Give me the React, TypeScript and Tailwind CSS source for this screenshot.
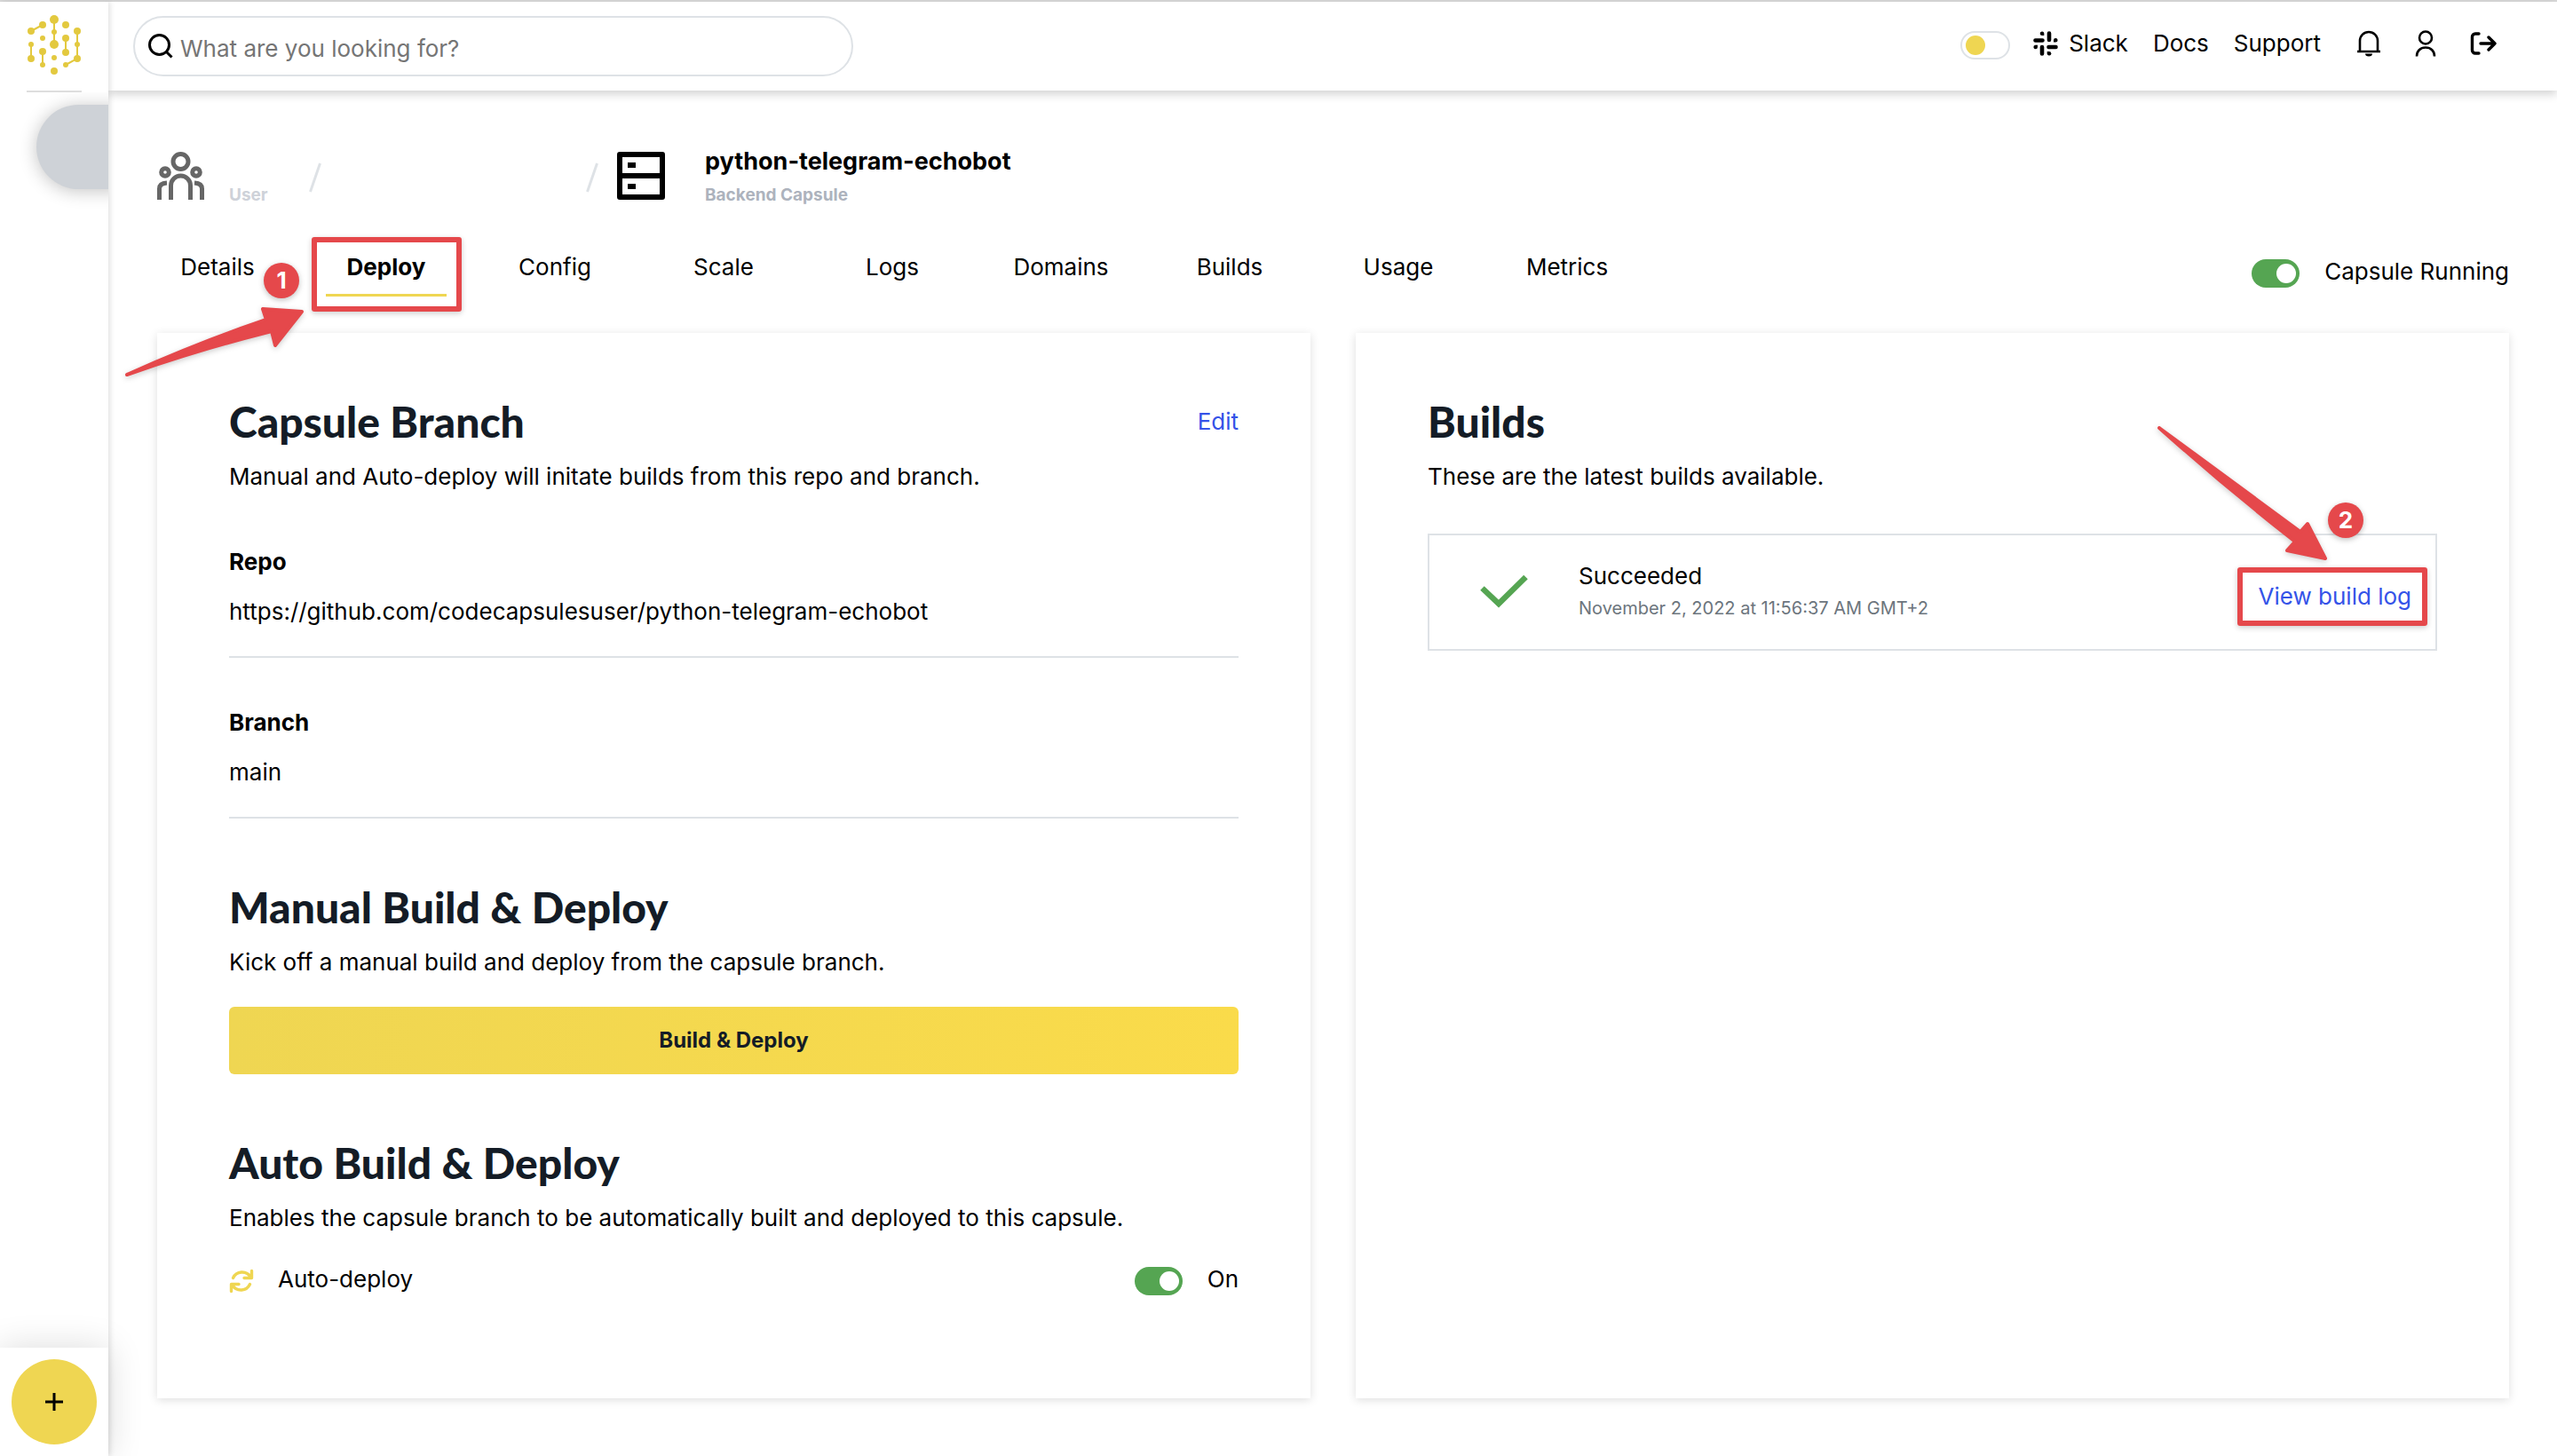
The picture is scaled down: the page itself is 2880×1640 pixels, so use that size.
import React from "react";

const TABS = ["Details", "Deploy", "Config", "Scale", "Logs", "Domains", "Builds", "Usage", "Metrics"];

const NODES: [number, number, number][] = [
  [31, 6, 5], [31, 20, 3], [31, 34, 5], [31, 49, 3], [31, 64, 4],
  [18, 12, 4], [5, 19, 4], [18, 27, 3], [5, 34, 3], [5, 50, 4], [18, 42, 4], [18, 57, 3],
  [44, 12, 4], [44, 27, 4], [44, 43, 4], [44, 57, 3], [57, 50, 4], [57, 34, 3], [57, 19, 4],
];

function Logo() {
  return (
    <svg viewBox="0 0 62 70" className="w-[62px] h-[70px]" fill="#e3c93f" stroke="#e3c93f" aria-hidden="true">
      <path
        d="M31 6V34M18 12 5 19M5 34V50M18 42V57M44 27V43M44 57 57 50V19"
        fill="none"
        strokeWidth="2"
      />
      {NODES.map(([x, y, r]) => (
        <circle key={`${x}-${y}`} cx={x} cy={y} r={r} stroke="none" />
      ))}
    </svg>
  );
}

function Sidebar() {
  return (
    <aside className="relative z-10 flex w-[122px] shrink-0 flex-col bg-white shadow-[2px_0_6px_rgba(0,0,0,0.12)]">
      <a href="#home" aria-label="Home" className="mt-[14px] flex justify-center">
        <Logo />
      </a>
      <hr className="mx-auto mt-4 w-[62px] border-t-2 border-[#dedede]" />
      <div className="overflow-hidden pt-[14px] pb-8">
        <button
          type="button"
          aria-label="Current space"
          className="ml-[41px] block h-[95px] w-[95px] rounded-l-full bg-[#ced2d7] shadow-[0_2px_20px_rgba(0,0,0,0.24)]"
        />
      </div>
      <div className="mt-auto flex h-[122px] items-center justify-center bg-white shadow-[0_0_40px_rgba(0,0,0,0.14)]">
        <button
          type="button"
          aria-label="Add"
          className="flex h-24 w-24 items-center justify-center rounded-full bg-[#efd652]"
        >
          <svg viewBox="0 0 20 20" className="h-5 w-5" stroke="#000" strokeWidth="3" fill="none">
            <path d="M10 0V20M0 10H20" />
          </svg>
        </button>
      </div>
    </aside>
  );
}

function SlackIcon() {
  return (
    <svg viewBox="0 0 28 28" className="h-7 w-7" fill="none" stroke="#000" strokeWidth="4.600" strokeLinecap="round" aria-hidden="true">
      <path d="M18 2.500V10M2.500 10.500H10.500M10 18V25.500M17.500 18H25.500" />
      <g fill="#000" stroke="none">
        <path d="M12.300 5V2.400A2.300 2.300 0 1 0 10 5z" />
        <path d="M23 12.500h2.600A2.300 2.300 0 1 0 23 10.200z" />
        <path d="M15.700 23v2.600A2.300 2.300 0 1 0 18 23z" />
        <path d="M5 15.700H2.400A2.300 2.300 0 1 0 5 18z" />
      </g>
    </svg>
  );
}

function BellIcon() {
  return (
    <svg viewBox="0 0 28 30" className="h-[30px] w-7" fill="none" stroke="#000" strokeWidth="2.6">
      <path d="M1 24H27M4 24V12a10 10 0 0 1 20 0V24" />
      <path d="M10 26.500h8a4 3 0 0 1-8 0z" fill="#000" stroke="none" />
    </svg>
  );
}

function UserIcon() {
  return (
    <svg viewBox="0 0 24 30" className="h-[30px] w-6" fill="none" stroke="#000" strokeWidth="2.6">
      <circle cx="12" cy="8.500" r="7" />
      <path d="M2 29.500c0-6 4-10 10-10s10 4 10 10" />
    </svg>
  );
}

function LogoutIcon() {
  return (
    <svg viewBox="0 0 30 28" className="h-7 w-[30px]" fill="none" stroke="#000" strokeWidth="3.400" strokeLinecap="round" strokeLinejoin="round">
      <path d="M10 3H6a3.500 3.500 0 0 0-3.500 3.500V21.500A3.500 3.500 0 0 0 6 25h4" />
      <path d="M12 14H28M21 7l7 7-7 7" />
    </svg>
  );
}

function Header() {
  return (
    <header className="relative flex h-[100px] items-center justify-between bg-white pl-7 pr-[68px] shadow-[0_4px_10px_rgba(0,0,0,0.18)]">
      <label className="flex h-[68px] w-[811px] items-center gap-2 rounded-full border-2 border-[#dee2e6] pl-[15px]">
        <svg viewBox="0 0 28 28" className="h-7 w-7 shrink-0" fill="none" stroke="#000" strokeWidth="3">
          <circle cx="12.500" cy="12.500" r="11" />
          <path d="M20 20l6.500 6.500" />
        </svg>
        <input
          type="search"
          aria-label="Search"
          placeholder="What are you looking for?"
          className="w-full bg-transparent pt-[6px] text-[26px] leading-10 outline-none placeholder:text-[#757575]"
        />
      </label>
      <nav className="flex items-center pb-[6px] text-[26px] leading-10">
        <input
          type="checkbox"
          aria-label="Dark mode"
          className="relative mt-1 h-8 w-14 appearance-none rounded-full border-2 border-[#dee2e6] before:absolute before:left-1 before:top-[3px] before:h-[22px] before:w-[22px] before:rounded-full before:bg-[#efd652]"
        />
        <a href="#slack" className="ml-[26px] flex items-center gap-3">
          <SlackIcon />
          Slack
        </a>
        <a href="#docs" className="ml-7">Docs</a>
        <a href="#support" className="ml-7">Support</a>
        <button type="button" aria-label="Notifications" className="ml-10"><BellIcon /></button>
        <button type="button" aria-label="Account" className="ml-[38px]"><UserIcon /></button>
        <button type="button" aria-label="Log out" className="ml-[38px]"><LogoutIcon /></button>
      </nav>
    </header>
  );
}

function TeamIcon() {
  return (
    <svg viewBox="0 0 54 54" className="h-[54px] w-[54px]" fill="none" stroke="#666" strokeWidth="5">
      <circle cx="26.500" cy="11" r="8.500" />
      <circle cx="9" cy="23" r="4.300" />
      <circle cx="44" cy="23" r="4.300" />
      <path d="M15.500 54V38a11 11 0 0 1 22 0V54" />
      <path d="M2.500 54V41.500q0-6 8.500-6.500M50.500 54V41.500q0-6-8.500-6.500" />
    </svg>
  );
}

function ServerIcon() {
  return (
    <svg viewBox="0 0 54 54" className="h-[54px] w-[54px]" fill="none" stroke="#000" strokeWidth="6" strokeLinejoin="round">
      <path d="M3 3H51V51H3zM3 27H51" />
      <path d="M12 12h9v6h-9zM12 36h9v6h-9z" fill="#000" stroke="none" />
    </svg>
  );
}

function Slash() {
  return (
    <svg viewBox="0 0 14 34" className="mt-1 h-[34px] w-[14px]" stroke="#dee2e6" strokeWidth="3">
      <path d="M1.500 33 12.500 1" />
    </svg>
  );
}

function Breadcrumb() {
  return (
    <div className="flex items-center">
      <TeamIcon />
      <span className="ml-[27px] w-[90px] self-end text-[19px] leading-6 font-bold text-[#ced2d9]">User</span>
      <Slash />
      <span className="w-[298px]" />
      <Slash />
      <span className="ml-[21px]"><ServerIcon /></span>
      <div className="ml-[45px]">
        <h1 className="text-[27px] leading-9 font-bold">python-telegram-echobot</h1>
        <p className="mt-2 text-[19px] leading-6 font-bold text-[#adb3bd]">Backend Capsule</p>
      </div>
    </div>
  );
}

function Toggle({ label }: { label: string }) {
  return (
    <input
      type="checkbox"
      defaultChecked
      aria-label={label}
      className="relative mt-1 h-8 w-[54px] appearance-none rounded-full bg-[#55a552] before:absolute before:right-1 before:top-[5px] before:h-[22px] before:w-[22px] before:rounded-full before:bg-white"
    />
  );
}

function Badge({ n, place }: { n: number; place: string }) {
  return (
    <span className={`absolute flex h-10 w-10 items-center justify-center rounded-full bg-[#e5484b] text-[26px] leading-10 font-bold text-white shadow-[0_2px_6px_rgba(0,0,0,0.25)] ${place}`}>
      {n}
    </span>
  );
}

function TabCallout() {
  return (
    <span className="pointer-events-none absolute -left-4 -right-[17px] -top-[14px] -bottom-5 z-20 rounded-[3px] border-6 border-[#e5484b] shadow-[0_2px_6px_rgba(0,0,0,0.2)]">
      <Badge n={1} place="-left-[60px] top-[23px]" />
      <svg viewBox="0 0 210 90" className="absolute -left-[221px] top-[67px] h-[90px] w-[210px] drop-shadow-[0_2px_3px_rgba(0,0,0,0.2)]" fill="#e5484b" stroke="#e5484b" strokeWidth="4" strokeLinejoin="round">
        <path d="M7 82Q90 45 164 20L160 8 204 11 174 49 170 33Q90 53 7 82z" />
      </svg>
    </span>
  );
}

function LinkCallout() {
  return (
    <span className="pointer-events-none absolute -left-6 -right-[18px] -top-[13px] -bottom-[13px] rounded-[3px] border-6 border-[#e5484b] shadow-[0_2px_6px_rgba(0,0,0,0.2)]">
      <Badge n={2} place="right-[66px] -top-[79px]" />
      <svg viewBox="0 0 200 160" className="absolute right-[102px] -top-[169px] h-40 w-[200px] drop-shadow-[0_2px_3px_rgba(0,0,0,0.2)]" fill="#e5484b" stroke="#e5484b" strokeWidth="4" strokeLinejoin="round">
        <path d="M6 6 165 123 173 114 193 153 150 144 159 134Q80 72 6 6z" />
      </svg>
    </span>
  );
}

function Tabs() {
  return (
    <div className="mt-[49px] flex items-start justify-between text-[26px] leading-10">
      <nav className="flex gap-[54px]">
        {TABS.map((tab) =>
          tab === "Deploy" ? (
            <a key={tab} href="#deploy" aria-current="page" className="relative w-[136px] border-b-3 border-[#efd652] pb-[10px] text-center font-bold">
              {tab}
              <TabCallout />
            </a>
          ) : (
            <a key={tab} href={`#${tab.toLowerCase()}`} className="w-[136px] text-center">
              {tab}
            </a>
          ),
        )}
      </nav>
      <div className="mt-[5px] flex items-center gap-7">
        <Toggle label="Capsule Running" />
        <span>Capsule Running</span>
      </div>
    </div>
  );
}

function Heading({ children }: { children: React.ReactNode }) {
  return <h2 className="font-[Lato,sans-serif] text-[48px] leading-14 font-black text-[#141c26]">{children}</h2>;
}

function Field({ label, value }: { label: string; value: string }) {
  return (
    <div className="border-b-2 border-[#dee2e6] pb-[30px]">
      <dt className="font-bold">{label}</dt>
      <dd className="mt-4">{value}</dd>
    </div>
  );
}

function RefreshIcon() {
  return (
    <svg viewBox="0 0 28 28" className="mt-1 h-7 w-7" fill="none" stroke="#efd652" strokeWidth="3.400" strokeLinecap="round" strokeLinejoin="round" aria-hidden="true">
      <path d="M25.500 2.500V10.500H17M4.500 10.500C8 3 19 1 25 10" />
      <path d="M2.500 25.500V17.500H11M23.500 17.500C20 25 9 27 3 18" />
    </svg>
  );
}

function DeployCard() {
  return (
    <section className="bg-white px-[81px] pt-[72px] pb-[110px] shadow-[0_2px_10px_rgba(0,0,0,0.13)]">
      <div className="flex items-start justify-between">
        <Heading>Capsule Branch</Heading>
        <a href="#edit" className="mt-2 text-[#3553e8]">Edit</a>
      </div>
      <p className="mt-[14px]">Manual and Auto-deploy will initate builds from this repo and branch.</p>
      <dl className="mt-14 flex flex-col gap-[53px]">
        <Field label="Repo" value="https://github.com/codecapsulesuser/python-telegram-echobot" />
        <Field label="Branch" value="main" />
      </dl>
      <div className="mt-[72px]">
        <Heading>Manual Build &amp; Deploy</Heading>
        <p className="mt-[14px]">Kick off a manual build and deploy from the capsule branch.</p>
        <button type="button" className="mt-[30px] h-[76px] w-full rounded-md bg-linear-to-r from-[#efd652] to-[#fadb4a] text-2xl font-bold text-[#141c26]">
          Build &amp; Deploy
        </button>
      </div>
      <div className="mt-[72px]">
        <Heading>Auto Build &amp; Deploy</Heading>
        <p className="mt-[14px]">Enables the capsule branch to be automatically built and deployed to this capsule.</p>
        <div className="mt-[29px] flex items-center">
          <RefreshIcon />
          <span className="ml-[27px]">Auto-deploy</span>
          <span className="ml-auto flex items-center gap-7">
            <Toggle label="Auto-deploy" />
            <span>On</span>
          </span>
        </div>
      </div>
    </section>
  );
}

function BuildsCard() {
  return (
    <section className="bg-white px-[81px] pt-[72px] shadow-[0_2px_10px_rgba(0,0,0,0.13)]">
      <Heading>Builds</Heading>
      <p className="mt-[14px]">These are the latest builds available.</p>
      <div className="mt-11 flex items-center border-2 border-[#dee2e6] pl-[57px] pr-[27px] pt-[26px] pb-8">
        <svg viewBox="0 0 54 38" className="mt-1 h-[38px] w-[54px]" fill="none" stroke="#55a552" strokeWidth="6.500" aria-label="Succeeded">
          <path d="M2.500 15.500 21 33 51.500 3" />
        </svg>
        <div className="ml-[57px]">
          <p>Succeeded</p>
          <p className="mt-0.5 text-xl leading-7 text-[#6c757d]">November 2, 2022 at 11:56:37 AM GMT+2</p>
        </div>
        <a href="#log" className="relative mt-4 ml-auto text-[#3553e8]">
          View build log
          <LinkCallout />
        </a>
      </div>
    </section>
  );
}

export default function App() {
  return (
    <div className="flex min-h-screen border-t-2 border-[#d9d9d9] bg-white font-[Inter,sans-serif] text-[26px] leading-10 text-black">
      <Sidebar />
      <div className="flex min-w-0 flex-1 flex-col">
        <Header />
        <main className="flex flex-1 flex-col pt-[62px] pr-[54px] pb-[65px] pl-[55px]">
          <Breadcrumb />
          <Tabs />
          <div className="mt-[41px] grid flex-1 grid-cols-2 gap-[51px]">
            <DeployCard />
            <BuildsCard />
          </div>
        </main>
      </div>
    </div>
  );
}
